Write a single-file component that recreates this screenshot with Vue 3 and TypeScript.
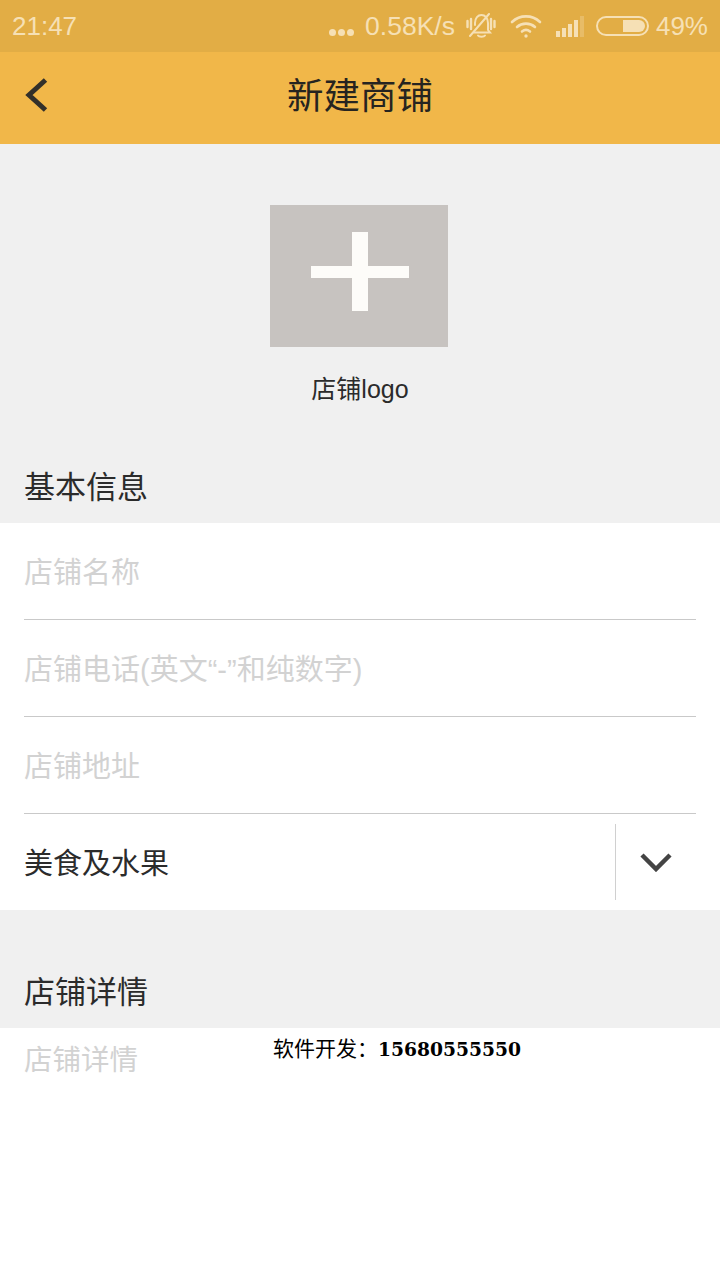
<script setup lang="ts">
const fields: string[] = ['店铺名称', '店铺电话(英文“-”和纯数字)', '店铺地址']
const signalBars: { h: number; o: number }[] = [
  { h: 6, o: 1 },
  { h: 9, o: 1 },
  { h: 13, o: 1 },
  { h: 17, o: 1 },
  { h: 21, o: 0.3 },
]
</script>

<template>
  <div class="page">
    <div class="status">
      <span class="time">21:47</span>
      <div class="status-right">
        <span class="dots"><i></i><i></i><i></i></span>
        <span class="speed">0.58K/s</span>
        <svg class="bell" width="30" height="26" viewBox="0 0 30 26" fill="none" stroke="#f6e0b5" stroke-width="2" stroke-linecap="round">
          <path d="M9 12v-2c0-5 3-8 6.500-8S22 5 22 10v7l2 2.500H8" />
          <path d="M12 22.500c1 1.500 6 1.500 7 0" />
          <path d="M4 23 23 1" />
          <path d="M1.500 8v6M5 6v10M25 6v10M28.500 8v6" stroke-width="2.400" />
        </svg>
        <svg class="wifi" width="32" height="24" viewBox="0 0 32 24" fill="none" stroke="#f6e0b5" stroke-width="2.600" stroke-linecap="round">
          <path d="M2 8c8-7.500 20-7.500 28 0" />
          <path d="M7 13c5-4.500 13-4.500 18 0" />
          <path d="M12 17.500c2.500-2 5.500-2 8 0" />
          <circle cx="16" cy="22" r="1.700" fill="#f6e0b5" stroke="none" />
        </svg>
        <span class="signal">
          <i v-for="(b, n) in signalBars" :key="n" :style="{ height: b.h + 'px', opacity: b.o }"></i>
        </span>
        <span class="battery"><i></i></span>
        <span class="percent">49%</span>
      </div>
    </div>

    <header class="nav">
      <svg class="back" width="24" height="36" viewBox="0 0 24 36" fill="none" stroke="#33302a" stroke-width="5">
        <path d="M21.500 3 5 18l16.500 15" />
      </svg>
      <h1 class="title">新建商铺</h1>
    </header>

    <section class="logo-area">
      <div class="logo-box">
        <svg class="plus" width="98" height="79" viewBox="0 0 98 79" fill="#fdfcf9">
          <rect x="41" y="0" width="16" height="79" />
          <rect x="0" y="34" width="98" height="12" />
        </svg>
      </div>
      <span class="logo-label">店铺logo</span>
    </section>

    <h2 class="section-title basic">基本信息</h2>
    <div class="form">
      <div v-for="f in fields" :key="f" class="row">
        <span class="placeholder">{{ f }}</span>
      </div>
      <div class="row select">
        <span class="value">美食及水果</span>
        <div class="arrow">
          <svg width="32" height="20" viewBox="0 0 32 20" fill="none" stroke="#444" stroke-width="4.500">
            <path d="M2 3l14 14L30 3" />
          </svg>
        </div>
      </div>
    </div>

    <h2 class="section-title detail">店铺详情</h2>
    <div class="detail-body">
      <span class="placeholder small">店铺详情</span>
      <div class="watermark">软件开发：<b>15680555550</b></div>
    </div>
  </div>
</template>

<style>
html, body { margin: 0; padding: 0; background: #f0f0f0; }
</style>

<style scoped>
.page {
  width: 720px;
  height: 1280px;
  display: flex;
  flex-direction: column;
  background: #f0f0f0;
  overflow: hidden;
  font-family: "Liberation Sans", "Noto Sans CJK SC", sans-serif;
  color: #2b2b2b;
}
.status {
  height: 52px;
  flex: none;
  display: flex;
  align-items: center;
  justify-content: space-between;
  padding: 0 12px;
  background: #e2ad45;
  color: #f6e0b5;
  font-size: 26px;
}
.status-right { display: flex; align-items: center; }
.dots { display: flex; gap: 2px; margin-top: 13px; margin-right: 11px; }
.dots i { width: 7px; height: 7px; border-radius: 50%; background: #f6e0b5; }
.speed { font-size: 26.500px; margin-right: 11px; }
.bell { margin-right: 14px; }
.wifi { margin-right: 14px; }
.signal { display: flex; align-items: flex-end; gap: 2px; height: 22px; margin-right: 12px; }
.signal i { width: 4px; background: #f6e0b5; }
.battery {
  box-sizing: border-box;
  width: 53px;
  height: 20px;
  border: 2px solid #f6e0b5;
  border-radius: 10px;
  margin-right: 7px;
  display: flex;
  justify-content: flex-end;
  padding: 2px;
}
.battery i { width: 22px; background: #f6e0b5; border-radius: 0 6px 6px 0; }
.percent { font-size: 26px; }
.nav {
  position: relative;
  height: 92px;
  flex: none;
  background: #f1b749;
  display: flex;
  align-items: center;
  justify-content: center;
}
.back { position: absolute; left: 24px; top: 25px; }
.title {
  margin: 0;
  font-weight: 400;
  font-size: 36.500px;
  line-height: 88px;
  height: 92px;
  margin-top: -4px;
  color: #262420;
  font-family: "Noto Sans CJK SC", sans-serif;
}
.logo-area {
  flex: none;
  height: 304px;
  box-sizing: border-box;
  padding-top: 61px;
  padding-right: 2px;
  display: flex;
  flex-direction: column;
  align-items: center;
}
.logo-box {
  width: 178px;
  height: 142px;
  background: #c7c3c0;
  display: flex;
  align-items: center;
  justify-content: center;
}
.plus { margin-top: -9px; margin-left: 2px; }
.logo-label {
  margin-top: 25px;
  margin-left: 2px;
  font-size: 25px;
  line-height: 34px;
}
.section-title {
  margin: 0;
  flex: none;
  padding-left: 24px;
  font-weight: 400;
  font-size: 31px;
  box-sizing: border-box;
  font-family: "Noto Sans CJK SC", sans-serif;
}
.basic { height: 75px; line-height: 74px; }
.detail { height: 118px; line-height: 160px; }
.form { flex: none; background: #fff; height: 387px; padding: 0 24px; box-sizing: border-box; }
.row {
  height: 97px;
  box-sizing: border-box;
  border-bottom: 1px solid #c9c9c9;
  display: flex;
  align-items: center;
  padding-bottom: 2px;
  font-size: 29px;
}
.placeholder { color: #d2d2d2; font-size: 29px; }
.small { font-size: 28.500px; display: block; margin-top: 1px; }
.select { border-bottom: 0; justify-content: space-between; height: 96px; padding-bottom: 0; }
.value { color: #2b2b2b; margin-top: -2px; }
.arrow {
  width: 81px;
  height: 76px;
  box-sizing: border-box;
  border-left: 1px solid #d0d0d0;
  display: flex;
  align-items: center;
  justify-content: center;
  margin-top: 0;
}
.detail-body {
  position: relative;
  flex: 1;
  background: #fff;
  padding: 10px 24px 0;
  line-height: 42px;
}
.watermark {
  position: absolute;
  left: 273px;
  top: 6px;
  font-size: 21px;
  line-height: 30px;
  color: #000;
  white-space: nowrap;
  font-family: "Liberation Serif", "Noto Sans CJK SC", serif;
}
.watermark b { font-family: "DejaVu Serif", serif; font-weight: 700; font-size: 18.700px; }
</style>
